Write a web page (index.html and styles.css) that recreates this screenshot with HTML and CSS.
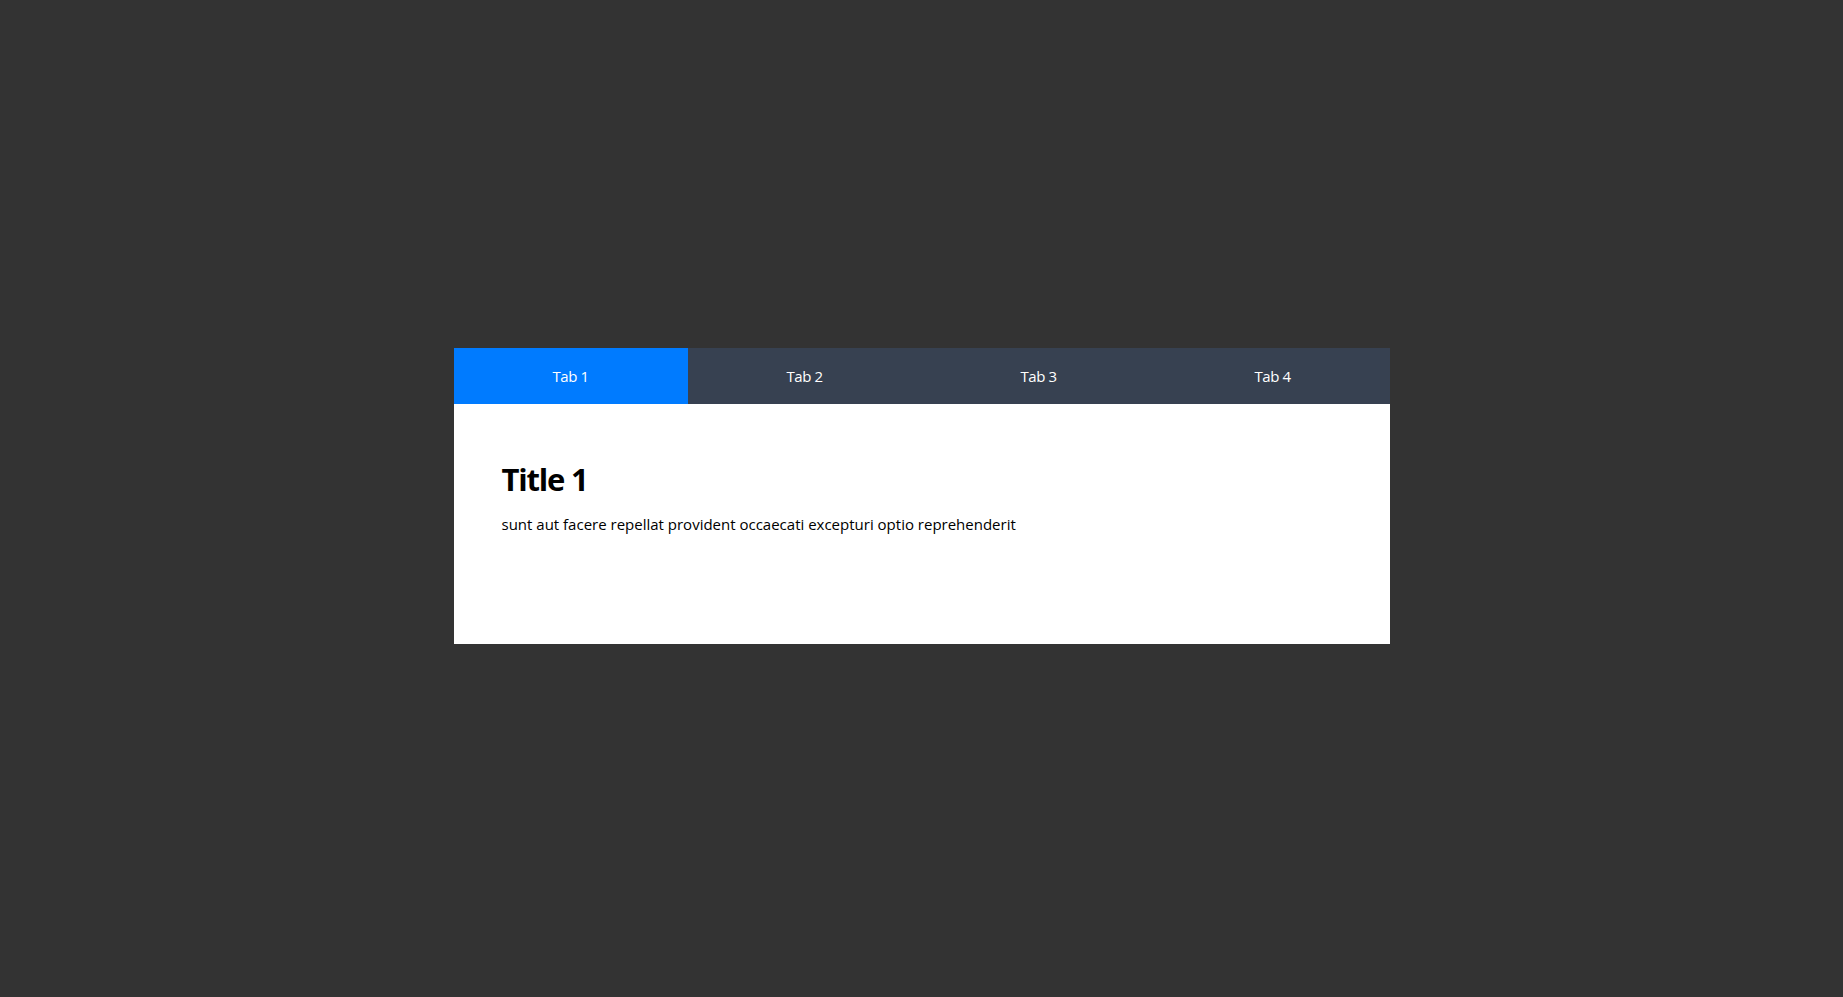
FILE: index.html
```html
<!DOCTYPE html>
<html lang="en">
<head>
<meta charset="utf-8">
<title>Tabs</title>
<link rel="stylesheet" href="styles.css">
</head>
<body>
<div class="page">
  <div class="tabs">
    <div class="tab-bar">
      <button class="tab active">Tab 1</button>
      <button class="tab">Tab 2</button>
      <button class="tab">Tab 3</button>
      <button class="tab">Tab 4</button>
    </div>
    <div class="tab-panel">
      <h1 class="panel-title">Title 1</h1>
      <p class="panel-text">sunt aut facere repellat provident occaecati excepturi optio reprehenderit</p>
    </div>
  </div>
</div>
</body>
</html>
```
FILE: styles.css
```css
html, body {
  margin: 0;
  padding: 0;
  height: 100%;
}
body {
  background: #333333;
  font-family: "Open Sans", "Noto Sans", sans-serif;
}
.page {
  height: 100%;
  display: flex;
  align-items: center;
  justify-content: center;
}
.tabs {
  width: 936px;
  margin-top: -5px;
}
.tab-bar {
  display: flex;
  background: #374151;
}
.tab {
  flex: 1;
  border: 0;
  background: transparent;
  color: #ffffff;
  font: 15px/24px "Open Sans", sans-serif;
  letter-spacing: -0.4px;
  padding: 16px 0;
  cursor: pointer;
}
.tab.active {
  background: #007bff;
}
.tab-panel {
  background: #ffffff;
  height: 240px;
  padding: 57px 48px 0;
  box-sizing: border-box;
}
.panel-title {
  margin: 0 0 15px;
  font-size: 31px;
  line-height: 36px;
  letter-spacing: -1.2px;
  font-weight: 700;
  color: #000;
}
.panel-text {
  margin: 0;
  font-size: 15px;
  line-height: 24px;
  color: #000;
}
```
